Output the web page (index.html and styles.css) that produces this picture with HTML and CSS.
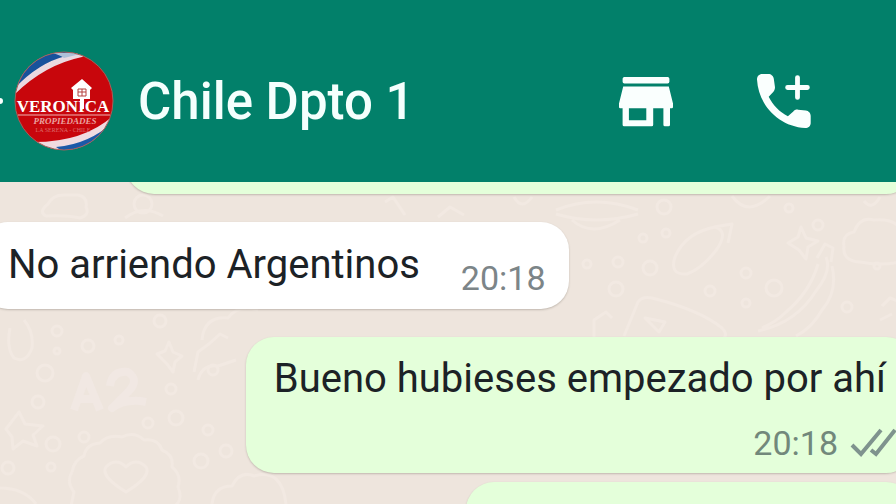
FILE: index.html
```html
<!DOCTYPE html>
<html lang="es">
<head>
    <meta charset="UTF-8">
    <meta name="viewport" content="width=device-width, initial-scale=1.0">
    <title>Chile Dpto 1</title>
    <link rel="stylesheet" href="styles.css">
</head>
<body>
    <header class="topbar">
        <button type="button" class="back" aria-label="Atrás">
            <svg viewBox="0 0 24 24"><path d="M20 11H7.83l5.59-5.59L12 4l-8 8 8 8 1.41-1.41L7.83 13H20a1 1 0 0 0 0-2z"/></svg>
        </button>
        <svg class="avatar" viewBox="0 0 100 100" role="img" aria-label="Veronica Propiedades">
            <defs>
                <clipPath id="round"><circle cx="50" cy="50" r="49"/></clipPath>
            </defs>
            <g clip-path="url(#round)">
                <rect width="100" height="100" fill="#c8060c"/>
                <path d="M0 0H78L68 6Q30 14 0 44Z" fill="#ead9e0"/>
                <path d="M0 0H62L52 5Q24 12 0 38Z" fill="#17529c"/>
                <path d="M38 2H70L50 7Q46 4 38 2Z" fill="#aec1d8"/>
                <path d="M100 64Q70 91 20 91L34 100H100Z" fill="#f0dbe0"/>
                <path d="M100 70Q76 93 42 96L48 100H100Z" fill="#1b59a8"/>
                <path d="M68 28l10 9-2 2v9h-6v10h-4V48h-7v-9l-2-2z" fill="#fff"/>
                <path d="M64 38h8v7h-8zM68 38v7M64 41h8" fill="none" stroke="#b4403f" stroke-width="1"/>
                <path d="M4 64H96" stroke="#eeb1b0" stroke-width="1"/>
            </g>
            <circle cx="50" cy="50" r="49" fill="none" stroke="#a5615b" stroke-width="1"/>
            <text class="brand" x="49" y="61" text-anchor="middle">VERONICA</text>
            <text class="brand-sub" x="51" y="73" text-anchor="middle">PROPIEDADES</text>
            <text class="brand-place" x="49" y="81" text-anchor="middle">LA SERENA - CHILE</text>
        </svg>
        <h1 class="title">Chile Dpto 1</h1>
        <div class="actions">
            <button type="button" class="action" aria-label="Tienda">
                <svg viewBox="0 0 24 24"><path d="M4.8 4h14.4q.6 0 .6.6v1q0 .6-.6.6H4.8q-.6 0-.6-.6v-1q0-.6.6-.6zM4.4 7.2h15.2L21 12.8V14q0 .4-.4.4H20v5.500q0 .5-.5.5h-1.200q-.5 0-.5-.5v-5.500h-3.400v5.500q0 .5-.5.5H4.700q-.5 0-.5-.5v-5.500h-.8Q3 14.400 3 14v-1.200zM6.300 14.400v4h5.800v-4z" fill-rule="evenodd"/></svg>
            </button>
            <button type="button" class="action" aria-label="Nueva llamada">
                <svg viewBox="0 0 24 24"><path d="M19.300 15.200l-2.600-.3c-.6-.1-1.200.1-1.600.6l-1.800 1.600c-2.800-1.400-5-3.700-6.400-6.500l1.500-1.600c.4-.4.600-1 .6-1.600L8.600 4.600C8.500 3.700 7.700 3 6.800 3H4.700C3.700 3 3 3.800 3 4.800 3.500 13.500 10.300 20.500 19.100 21c1 0 1.800-.7 1.800-1.700V17c0-.9-.7-1.700-1.600-1.800z"/><path d="M16.500 4.200v6.600M13.200 7.500h6.600" class="plus"/></svg>
            </button>
        </div>
    </header>

    <main class="chat">
        <svg class="wallpaper" viewBox="0 0 896 322" preserveAspectRatio="xMinYMin slice" aria-hidden="true">
            <!-- top strip -->
            <path d="M48 22q5-10 18-9h12q10 2 8 12 4 8-6 11-14-3-34-2-8-4 2-12zM134 22a9 9 0 1 0 18 0 9 9 0 1 0-18 0M125 36q18-14 38-2M385 20l8-5 12 18M438 35l12-10 14 8"/>
            <path d="M514 15q8 14 18 0M556 28q40-16 82 0M556 32q40 12 82 0M572 38q20 18 48 0M732 14q16 22 38 0M880 15q-8 14-16 4"/>
            <!-- right side doodles -->
            <path d="M675 75q-6 18 12 17 16-6 30-25 12-18-2-22-30 6-40 30zM714 45l18-3-4 19M844 64q-2-12 10-14 6-16 20-12 18-2 26 8M844 64q-2 15 16 16 20 4 40 0"/>
            <path d="M788 61l10-6 3-10 5 11 12 3-10 6-2 12-7-9zM826 75q6 14-10 34-20 32-58 40M832 84q6 26-10 44-10 18-26 26M818 82q-8 28-32 48-10 10-24 16M817 76l8-14 8 4-2 14"/>
            <path d="M624 154l14-34q4-6 14-4 48 12 70 30 6 6 2 10M645 136l20 4-6 10zM594 156v-18l12-8 6 6"/>
            <path d="M882 124l8-8 10 4M880 138l12-6"/>
            <!-- left side doodles -->
            <path d="M24 138q10 12 8 28-6 16-18 10-8-10-4-30M202 158q2-24 26-22 10-14 30-8M194 190l4-20q12-8 22-18l8 4M198 198q4-16 20-14l18-6"/>
            <path d="M157 172l8-3 4-9 4 10 9 4-7 6-2 10-6-8zM19 230l6 12 18 2-10 9 4 11-14-5-10 8-1-12-6-8z"/>
            <path d="M72 290q2-12 12-16 2-12 16-13 8-9 22-6 12-6 22 3 14-2 18 10 12 5 10 17 10 8 6 20 5 12-2 18M72 290q-6 10 2 20l-3 14"/>
            <path d="M126 310q-26-16-20-25 10-10 20 0 10-10 20 0 6 9-20 25zM0 306q24 0 36 16M212 322q2-18 20-18 8-16 22-10 28-8 32 28"/>
            <path class="bold" d="M74 228l12-34 14 34M79 217h16M110 204q2-16 18-14 12 8 0 20l-16 16q14-10 34-6"/>
            <g class="bubbles">
                <circle cx="664" cy="25" r="7"/><circle cx="789" cy="26" r="4"/><circle cx="818" cy="43" r="5"/>
                <circle cx="643" cy="56" r="4"/><circle cx="666" cy="51" r="4"/><circle cx="618" cy="80" r="5"/>
                <circle cx="650" cy="86" r="7"/><circle cx="746" cy="91" r="5"/><circle cx="774" cy="106" r="8"/>
                <circle cx="710" cy="109" r="5"/><circle cx="616" cy="107" r="7"/><circle cx="746" cy="121" r="4"/>
                <circle cx="847" cy="125" r="5"/><circle cx="877" cy="84" r="3"/><circle cx="587" cy="82" r="4"/>
                <circle cx="88" cy="164" r="6"/><circle cx="57" cy="149" r="5"/><circle cx="45" cy="191" r="8"/>
                <circle cx="57" cy="169" r="3"/><circle cx="38" cy="220" r="6"/><circle cx="171" cy="207" r="5"/>
                <circle cx="213" cy="188" r="5"/><circle cx="148" cy="241" r="5"/><circle cx="176" cy="236" r="7"/>
                <circle cx="208" cy="248" r="5"/><circle cx="84" cy="255" r="5"/><circle cx="53" cy="262" r="7"/>
                <circle cx="8" cy="286" r="6"/><circle cx="51" cy="285" r="4"/><circle cx="201" cy="279" r="7"/>
                <circle cx="226" cy="269" r="6"/><circle cx="160" cy="139" r="6"/><circle cx="119" cy="158" r="4"/>
            </g>
        </svg>

        <div class="bubble sent previous"></div>

        <div class="bubble received">
            <p class="text">No arriendo Argentinos</p>
            <time class="time">20:18</time>
        </div>

        <div class="bubble sent">
            <p class="text">Bueno hubieses empezado por ahí</p>
            <div class="meta">
                <time class="time">20:18</time>
                <svg class="ticks" viewBox="0 0 46 30" role="img" aria-label="Entregado"><path d="M2 17l9 9L31 2M21 22l5 4L45 2"/></svg>
            </div>
        </div>

        <div class="bubble sent next"></div>
    </main>
</body>
</html>
```
FILE: styles.css
```css
* {
    box-sizing: border-box;
}
body {
    display: flex;
    flex-direction: column;
    height: 100vh;
    margin: 0;
    overflow: hidden;
    font-family: Roboto, "Liberation Sans", sans-serif;
    background-color: #eee5dd;
}
button {
    padding: 0;
    border: none;
    background: none;
    cursor: pointer;
}
h1, p {
    margin: 0;
}

/* header */
.topbar {
    display: flex;
    flex-shrink: 0;
    align-items: center;
    padding: 51px 76px 31px 0;
    background-color: #02806a;
    color: #f4fffd;
}
.topbar button svg {
    display: block;
    width: 72px;
    height: 72px;
    fill: #fafffe;
}
.back {
    margin-left: -60px;
}
.avatar {
    flex-shrink: 0;
    width: 100px;
    height: 100px;
    margin-left: 2px;
}
.brand {
    font: bold 17px "Liberation Serif", serif;
    fill: #fff;
}
.brand-sub {
    font: italic bold 9px "Liberation Serif", serif;
    fill: #eba19f;
}
.brand-place {
    font: 6px "Liberation Serif", serif;
    fill: #dc6c6a;
}
.title {
    flex: 1;
    margin-left: 24px;
    padding-top: 2px;
    font-size: 51px;
    font-weight: 500;
    line-height: 60px;
    white-space: nowrap;
}
.actions {
    display: flex;
    gap: 66px;
}
.action .plus {
    fill: none;
    stroke: #fafffe;
    stroke-width: 1.6;
    stroke-linecap: round;
}

/* conversation */
.chat {
    position: relative;
    display: flex;
    flex: 1;
    flex-direction: column;
    align-items: flex-start;
    min-height: 0;
    overflow: hidden;
}
.wallpaper {
    position: absolute;
    top: 0;
    left: 0;
    width: 100%;
    height: 100%;
    fill: none;
    stroke: #f2e9e2;
    stroke-width: 3;
    stroke-linejoin: round;
}
.wallpaper .bold {
    stroke: #f1e8e3;
    stroke-width: 8;
}
.bubble {
    position: relative;
    flex-shrink: 0;
    border-radius: 28px;
    box-shadow: 0 1px 2px rgba(60, 50, 40, 0.25);
}
.received {
    display: flex;
    align-items: flex-end;
    gap: 41px;
    margin: 28px 0 28px -20px;
    padding: 18px 23px 11px 28px;
    background-color: #fff;
}
.sent {
    align-self: flex-end;
    margin-right: -18px;
    padding: 17px 28px 10px;
    background-color: #e4ffda;
}
.previous {
    width: 88%;
    height: 72px;
    margin-top: -60px;
}
.next {
    width: 50%;
    height: 136px;
    margin-top: 9px;
}
.text {
    padding-bottom: 8px;
    color: #1c2226;
    font-size: 40px;
    line-height: 50px;
    white-space: nowrap;
}
.meta {
    display: flex;
    align-items: center;
    justify-content: flex-end;
    gap: 12px;
    margin-right: -10px;
    padding-top: 11px;
}
.time {
    color: #7c8588;
    font-size: 34px;
    line-height: 40px;
}
.sent .time {
    color: #72887b;
}
.ticks {
    width: 46px;
    height: 30px;
    fill: none;
    stroke: #7f938e;
    stroke-width: 4;
}
```
